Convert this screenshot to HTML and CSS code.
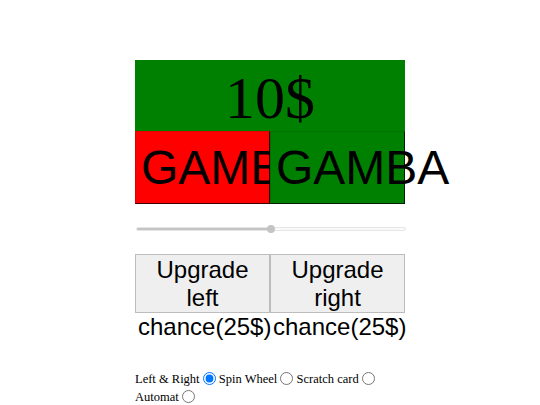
FILE: index.html
```html
<!DOCTYPE html>
<html>
<head>
<meta charset="utf-8">
<link rel="stylesheet" href="styles.css">
</head>
<body>
<div class="game">
  <div class="money">10$</div>
  <div class="pair">
    <div class="gamba gamba-red">GAMBA</div>
    <div class="gamba gamba-green">GAMBA</div>
  </div>
  <input class="slider" type="range" min="0" max="100" value="50">
  <div class="upgrades">
    <div class="col">
      <button class="upgrade">Upgrade left</button>
      <div class="chance">chance(25$)</div>
    </div>
    <div class="col">
      <button class="upgrade">Upgrade right</button>
      <div class="chance">chance(25$)</div>
    </div>
  </div>
  <div class="modes">
    Left &amp; Right <input class="mode" type="radio" name="mode" checked> Spin Wheel <input class="mode" type="radio" name="mode"> Scratch card <input class="mode" type="radio" name="mode"> Automat <input class="mode" type="radio" name="mode">
  </div>
</div>
</body>
</html>
```
FILE: styles.css
```css
html, body {
  margin: 0;
  padding: 0;
  background: #fff;
}
.game {
  width: 270px;
  margin: 60px auto 0;
  font-family: "Liberation Serif", serif;
}
.money {
  height: 71px;
  background: #008000;
  font-family: "Liberation Serif", serif;
  font-size: 60px;
  line-height: 77px;
  text-align: center;
  color: #000;
}
.pair {
  display: flex;
}
.gamba {
  width: 135px;
  height: 73px;
  box-sizing: border-box;
  border: 1px solid;
  border-color: rgba(0,0,0,0.12) rgba(0,0,0,0.75) rgba(0,0,0,0.75) rgba(0,0,0,0.12);
  padding-left: 5px;
  font-family: "Liberation Sans", Arial, sans-serif;
  font-size: 48px;
  line-height: 71px;
  white-space: nowrap;
  color: #000;
}
.gamba-red {
  background: #ff0000;
}
.gamba-green {
  background: #008000;
}
.slider {
  -webkit-appearance: none;
  appearance: none;
  display: block;
  box-sizing: border-box;
  width: 270px;
  height: 4px;
  margin: 23px 0 0 1px;
  padding: 0;
  border: 1px solid #e6e6e6;
  border-radius: 2px;
  background: linear-gradient(to right, #c4c4c4 50%, #fafafa 50%);
  outline: none;
}
.slider::-webkit-slider-thumb {
  -webkit-appearance: none;
  appearance: none;
  width: 8px;
  height: 8px;
  border-radius: 50%;
  background: #c4c4c4;
}
.upgrades {
  display: flex;
  margin-top: 23px;
}
.col {
  width: 135px;
}
.upgrade {
  display: block;
  width: 135px;
  height: 59px;
  margin: 0;
  padding: 1px 6px;
  box-sizing: border-box;
  background: #efefef;
  border: 1px solid #bdbdbd;
  border-radius: 0;
  font-family: "Liberation Sans", Arial, sans-serif;
  font-size: 24px;
  line-height: normal;
  color: #000;
}
.chance {
  padding-left: 3px;
  white-space: nowrap;
  font-family: "Liberation Sans", Arial, sans-serif;
  font-size: 24px;
  line-height: normal;
  color: #000;
}
.modes {
  margin-top: 29px;
  font-size: 12.5px;
  line-height: 18px;
  color: #000;
}
.mode {
  width: 13px;
  height: 13px;
  margin: 0 0 0 0;
  vertical-align: -2px;
}
```
